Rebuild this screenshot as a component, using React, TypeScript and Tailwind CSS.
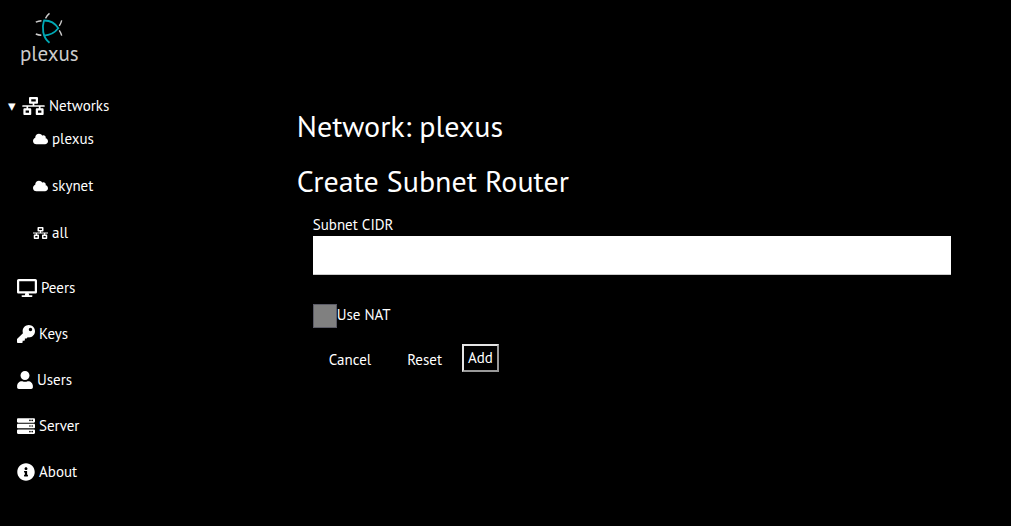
import { useState } from "react";
import type { ReactNode } from "react";
import {
  FaCloud,
  FaDesktop,
  FaInfoCircle,
  FaKey,
  FaNetworkWired,
  FaServer,
  FaUser,
} from "react-icons/fa";

type LinkItem = { label: string; icon: ReactNode };

const networks: LinkItem[] = [
  { label: "plexus", icon: <FaCloud className="h-3 w-[15px]" /> },
  { label: "skynet", icon: <FaCloud className="h-3 w-[15px]" /> },
  { label: "all", icon: <FaNetworkWired className="h-3 w-[15px]" /> },
];

const sections: LinkItem[] = [
  { label: "Peers", icon: <FaDesktop className="h-[18px] w-5" /> },
  { label: "Keys", icon: <FaKey className="h-[18px] w-[18px]" /> },
  { label: "Users", icon: <FaUser className="h-[18px] w-4" /> },
  { label: "Server", icon: <FaServer className="h-[18px] w-[18px]" /> },
  { label: "About", icon: <FaInfoCircle className="h-[18px] w-[18px]" /> },
];

function Logo() {
  return (
    <a href="#home" className="ml-5 flex w-fit flex-col items-center pt-3 text-[#cccccc]">
      <svg viewBox="36 12 28 32" className="h-8 w-7" fill="none" aria-hidden="true">
        <g stroke="#00a9b5" strokeWidth="1.8">
          <path d="M44.5 20.5C50.5 20.3 56 23 59.3 28.3C56 32.5 51 35.3 44.9 35.6" />
          <path d="M45 20.5C42.7 27.5 43.5 37.5 50.5 42.8" />
        </g>
        <g stroke="#cccccc" strokeWidth="1.4">
          <path d="M46.5 18.3Q48.2 15.2 50.5 13.4" />
          <path d="M36.8 22.2Q39.5 20.9 42.5 20.7" />
          <path d="M36.8 34Q39.5 35.1 42.3 35.2" />
          <path d="M60.3 25.8Q62 23.2 62.7 20.3" />
          <path d="M60.3 30.3Q62 32.8 62.7 35.7" />
        </g>
      </svg>
      <span className="-mt-1 text-[21px] leading-7">plexus</span>
    </a>
  );
}

function Sidebar() {
  return (
    <nav className="w-1/4 shrink-0">
      <Logo />
      <details open className="group mt-5">
        <summary className="flex h-[35px] cursor-pointer list-none items-center pl-2">
          <span className="w-[14px] -rotate-90 font-['DejaVu_Sans',sans-serif] text-[15px] leading-4 group-open:rotate-0">
            ▾
          </span>
          <FaNetworkWired className="h-[18px] w-[23px]" />
          <span className="ml-1">Networks</span>
        </summary>
        <ul>
          {networks.map(({ label, icon }) => (
            <li key={label} className="h-[47px] pt-1">
              <a href={`#network-${label}`} className="ml-[33px] flex h-6 w-fit items-center gap-1">
                {icon}
                {label}
              </a>
            </li>
          ))}
        </ul>
      </details>
      <ul className="pt-2">
        {sections.map(({ label, icon }) => (
          <li key={label} className="h-[46px] pt-1">
            <a href={`#${label}`} className="ml-[17px] flex h-6 w-fit items-center gap-1">
              {icon}
              {label}
            </a>
          </li>
        ))}
      </ul>
    </nav>
  );
}

function SubnetRouterForm() {
  const [cidr, setCidr] = useState("");
  return (
    <form className="px-4 pt-[10px]" onSubmit={(event) => event.preventDefault()}>
      <label htmlFor="cidr" className="block leading-[23px]">
        Subnet CIDR
      </label>
      <input
        id="cidr"
        type="text"
        value={cidr}
        onChange={(event) => setCidr(event.target.value)}
        className="block h-[39px] w-full border-b border-[#cccccc] bg-white p-2 text-black"
      />
      <div className="mt-[26px] flex items-center">
        <input
          id="nat"
          type="checkbox"
          className="mt-[3px] h-6 w-6 appearance-none border border-[#5b5b66] bg-[#808080] checked:bg-[#00a9b5]"
        />
        <label htmlFor="nat">Use NAT</label>
      </div>
      <div className="mt-4 flex items-center">
        <button type="button" className="px-4 pt-1">
          Cancel
        </button>
        <button type="reset" onClick={() => setCidr("")} className="ml-1 px-4 pt-1">
          Reset
        </button>
        <button
          type="submit"
          className="ml-1 h-7 border-2 border-t-[#e5e5e5] border-r-[#999999] border-b-[#999999] border-l-[#e5e5e5] px-1 leading-5"
        >
          Add
        </button>
      </div>
    </form>
  );
}

export default function App() {
  return (
    <div className="flex min-h-screen bg-black font-['PT_Sans','Noto_Sans',sans-serif] text-[15px] leading-5 text-white">
      <Sidebar />
      <main className="grow px-11 pt-[103px]">
        <h1 className="text-[30px] leading-[45px]">Network: plexus</h1>
        <h2 className="mt-[10px] text-[30px] leading-[45px]">Create Subnet Router</h2>
        <SubnetRouterForm />
      </main>
    </div>
  );
}
